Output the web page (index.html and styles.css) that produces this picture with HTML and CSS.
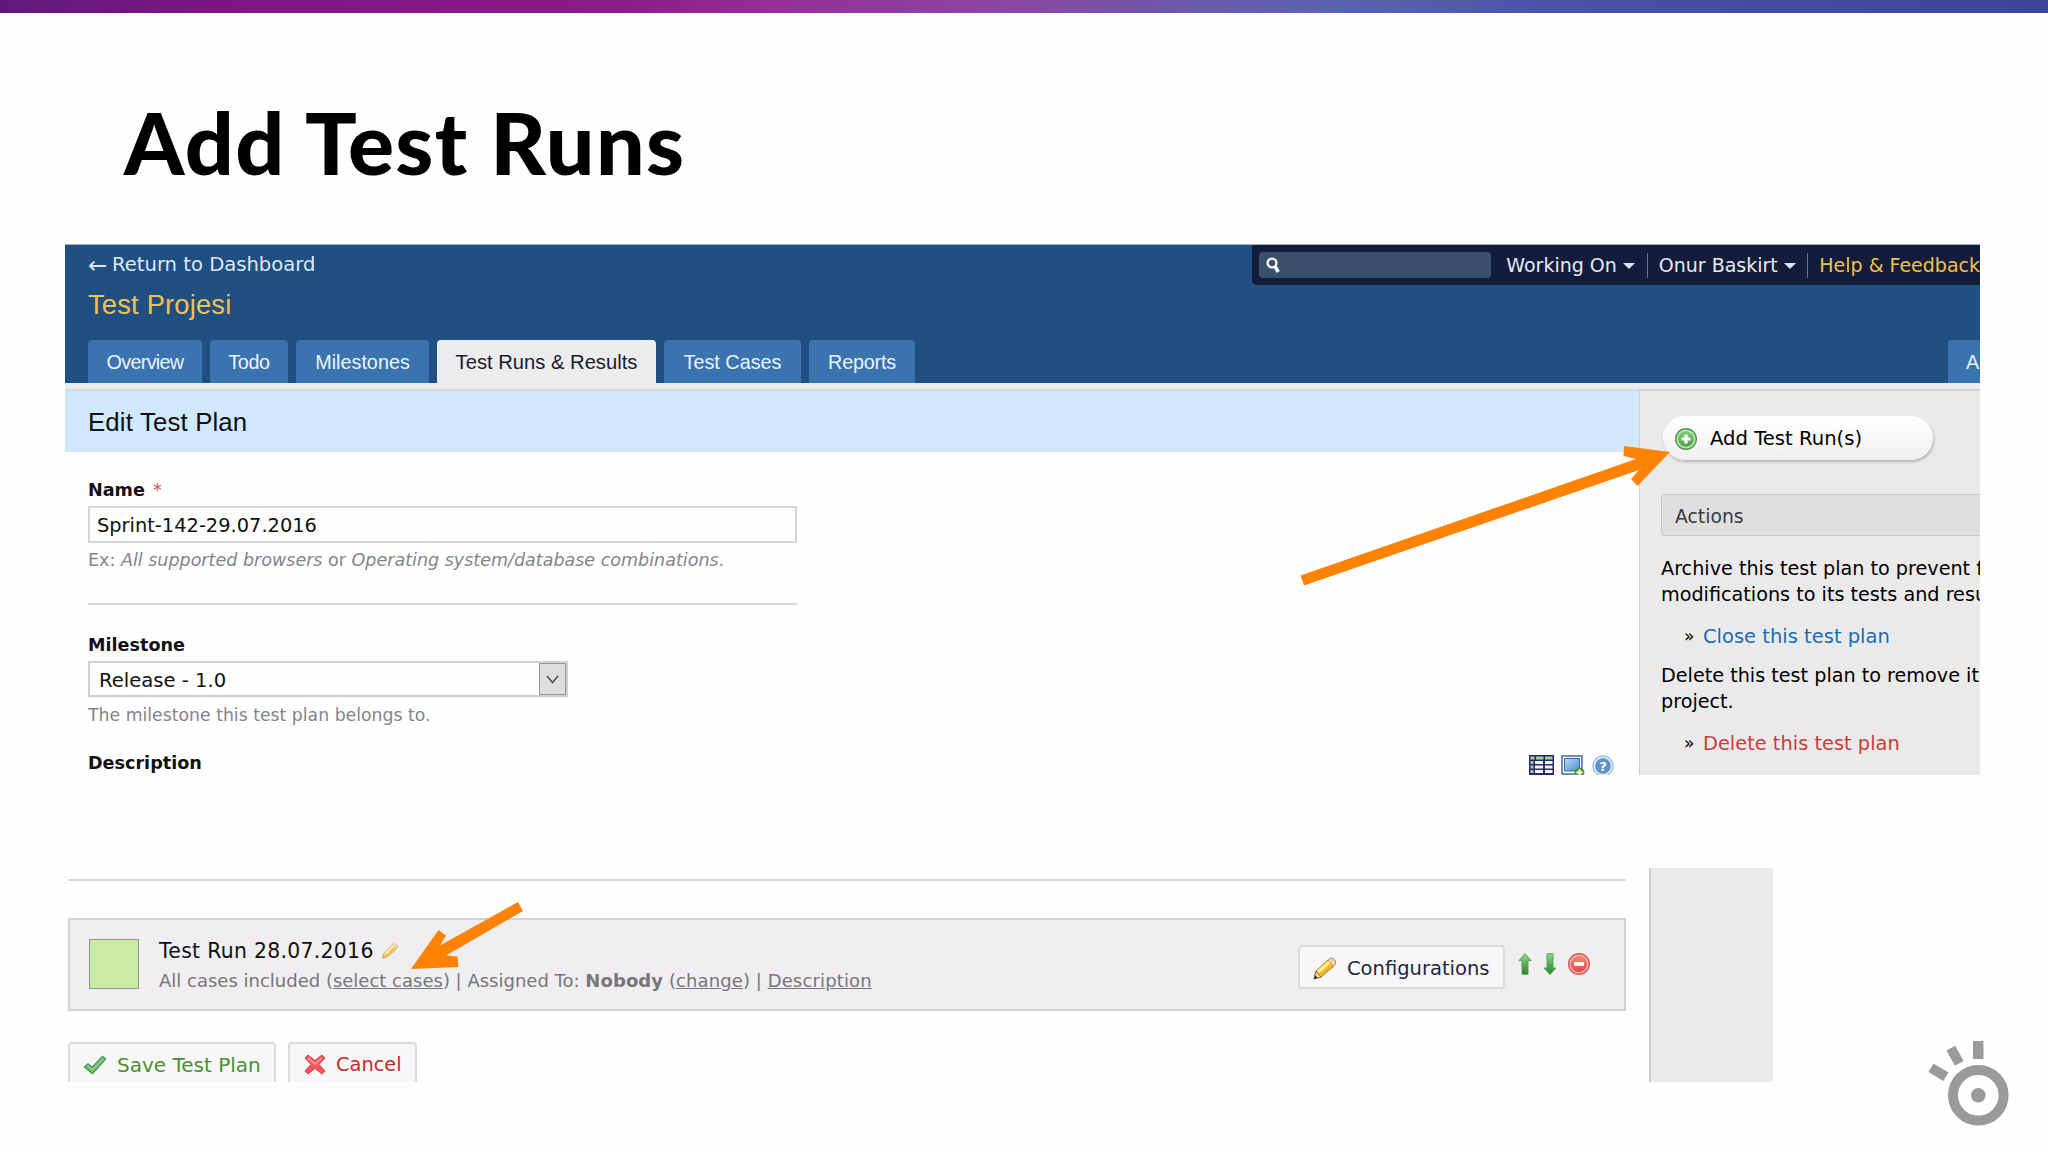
FILE: index.html
```
<!DOCTYPE html>
<html lang="en">
<head>
<meta charset="utf-8">
<title>Add Test Runs</title>
<link rel="stylesheet" href="styles.css">
</head>
<body>
<div class="stripe"></div>
<h1><span>Add Test Runs</span></h1>

<!-- plan editor -->
<div class="editor">
<div class="header">
  <div class="header-left">
    <a class="return"><span class="back">&larr;</span> <span>Return to Dashboard</span></a>
    <div class="project">Test Projesi</div>
    <div class="tabs">
      <a class="tab tab-overview">Overview</a>
      <a class="tab tab-todo">Todo</a>
      <a class="tab tab-milestones">Milestones</a>
      <a class="tab tab-runs active">Test Runs &amp; Results</a>
      <a class="tab tab-cases">Test Cases</a>
      <a class="tab tab-reports">Reports</a>
    </div>
  </div>
  <div class="header-right">
    <div class="topbar">
      <div class="search"><svg width="14" height="17" viewBox="0 0 14 17"><circle cx="6" cy="6" r="4.4" fill="none" stroke="#f4f6fa" stroke-width="2.4"/><path d="M9 9.5L12.3 15" stroke="#f4f6fa" stroke-width="3.6"/></svg></div>
      <span class="menu menu-working">Working On<i class="caret"></i></span>
      <span class="menu menu-user">Onur Baskirt<i class="caret"></i></span>
      <span class="menu menu-help">Help &amp; Feedback</span>
    </div>
    <a class="tab tab-admin">A</a>
  </div>
</div>

<div class="columns">
  <div class="main">
    <div class="page-title">Edit Test Plan</div>
    <div class="form">
      <div class="label">Name <span class="required">*</span></div>
      <div class="input">Sprint-142-29.07.2016</div>
      <div class="hint hint-name">Ex: <em>All supported browsers</em> or <em>Operating system/database combinations</em>.</div>
      <div class="rule"></div>
      <div class="label">Milestone</div>
      <div class="select"><span>Release - 1.0</span><span class="select-button"><svg width="13" height="9" viewBox="0 0 13 9"><path d="M1 1L6.500 7.500L12 1" fill="none" stroke="#505054" stroke-width="1.600"/></svg></span></div>
      <div class="hint hint-milestone">The milestone this test plan belongs to.</div>
      <div class="description">
        <div class="label">Description</div>
        <div class="tools">
          <svg width="25" height="21" viewBox="0 0 25 21"><rect width="25" height="21" fill="#28286a"/><g fill="#9ed29a"><path d="M1.500 1.500h4v3h-4zM7 1.500h7.500v3H7zM16 1.500h7.500v3H16zM1.500 6h3v3h-3zM1.500 10.500h3v3h-3zM1.500 15h3v3h-3z"/></g><g fill="#f4f4fb"><path d="M6 6h8v3H6zM16 6h7.500v3H16zM6 10.500h8v3H6zM16 10.500h7.500v3H16zM6 15h8v3H6zM16 15h7.500v3H16z"/></g></svg>
          <svg width="24" height="21" viewBox="0 0 24 21"><defs><linearGradient id="sky" x2="1" y2="1"><stop stop-color="#b8dcf5"/><stop offset="1" stop-color="#4c8cc8"/></linearGradient></defs><rect x="1" y="1" width="20" height="18" fill="#fff" stroke="#49659f" stroke-width="1.500"/><rect x="3.500" y="3.500" width="15" height="12.500" fill="url(#sky)" stroke="#3c6aa8"/><circle cx="18.500" cy="17.500" r="5" fill="#4d943b"/><path d="M18.500 14.500v6M15.500 17.500h6" stroke="#fff" stroke-width="2"/></svg>
          <svg width="22" height="22" viewBox="0 0 22 22"><circle cx="11" cy="11" r="10.200" fill="#dce9f6" stroke="#86a8d0"/><circle cx="11" cy="11" r="7.800" fill="#5f91ca"/><text x="11" y="16" text-anchor="middle" class="help-mark">?</text></svg>
        </div>
      </div>
    </div>
  </div>
  <div class="sidebar">
    <div class="pill">
      <svg width="22" height="22" viewBox="0 0 22 22"><defs><linearGradient id="leaf" x2="0" y2="1"><stop stop-color="#7fca7b"/><stop offset="1" stop-color="#4ba043"/></linearGradient></defs><circle cx="11" cy="11" r="10.300" fill="#bfe3b6" stroke="#4b9a46" stroke-width="1.400"/><circle cx="11" cy="11" r="7.800" fill="url(#leaf)"/><path d="M11 6.500v9M6.500 11h9" stroke="#fff" stroke-width="3.200"/></svg>
      <span>Add Test Run(s)</span>
    </div>
    <div class="box-title">Actions</div>
    <p>Archive this test plan to prevent f<br>modifications to its tests and resu</p>
    <div class="action"><span class="raquo">&raquo;</span><a class="close">Close this test plan</a></div>
    <p>Delete this test plan to remove it<br>project.</p>
    <div class="action"><span class="raquo">&raquo;</span><a class="delete">Delete this test plan</a></div>
  </div>
</div>
</div>

<!-- run list -->
<div class="bottom">
<div class="runs">
  <div class="runs-main">
    <div class="rule"></div>
    <div class="run">
      <div class="swatch"></div>
      <div class="run-text">
        <div class="run-name"><span>Test Run 28.07.2016</span>
          <svg width="18" height="16" viewBox="0 0 24 23"><path d="M1 22L3 15L16 2Q19 0 22 3Q24 6 21 9L8 20Z" fill="#efc660" stroke="#c99b55"/><path d="M5 16L17 4" stroke="#fff0a8" stroke-width="3"/><path d="M16 2Q19 0 22 3Q24 6 21 9Z" fill="#f3d5b5"/></svg>
        </div>
        <div class="run-info">All cases included (<u>select cases</u>) | Assigned To: <b>Nobody</b> (<u>change</u>) | <u>Description</u></div>
      </div>
      <div class="button config">
        <svg width="24" height="23" viewBox="0 0 24 23"><path d="M1 22L3 14L16 2Q19 0 22 3Q24 6 21 9L8 20Z" fill="#eeb92f" stroke="#b47a2c"/><path d="M5 15L17 4.500" stroke="#fff08a" stroke-width="3.500"/><path d="M15 3Q19 -1 22 3Q24 6 20.500 9.500Z" fill="#f4d2b4" stroke="#d6935b"/><path d="M3 14L8 20L1 22Z" fill="#f3d9ae" stroke="#9a6a30"/><path d="M1 22L2 18L4.500 21Z" fill="#3c2a18"/></svg>
        <span>Configurations</span>
      </div>
      <div class="run-icons">
        <svg width="14" height="22" viewBox="0 0 14 22"><defs><linearGradient id="up" x2="0" y2="1"><stop stop-color="#8ed98a"/><stop offset="1" stop-color="#267f2e"/></linearGradient></defs><path d="M7 .7L13 7.500H10V21.300H4V7.500H1Z" fill="url(#up)" stroke="#55a653"/></svg>
        <svg width="14" height="22" viewBox="0 0 14 22"><path d="M4 .7H10V15H13L7 21.500L1 15H4Z" fill="url(#up)" stroke="#55a653"/></svg>
        <svg width="22" height="22" viewBox="0 0 22 22"><defs><linearGradient id="stop" x2="0" y2="1"><stop stop-color="#f58a80"/><stop offset="1" stop-color="#e4473f"/></linearGradient></defs><circle cx="11" cy="11" r="10.300" fill="#f9beb6" stroke="#d9564e" stroke-width="1.400"/><circle cx="11" cy="11" r="8.300" fill="url(#stop)"/><path d="M6 11h10" stroke="#fff" stroke-width="3.600"/></svg>
      </div>
    </div>
    <div class="buttons">
      <div class="button save">
        <svg width="24" height="20" viewBox="0 0 24 20"><path d="M1 12L5 8.500L9 12L19.500 1L23 4L9.500 19Z" fill="#62b268" stroke="#3f8c48" stroke-linejoin="round"/><path d="M4.500 11L9.500 15L20 4" fill="none" stroke="#94d096" stroke-width="1.500"/></svg>
        <span>Save Test Plan</span>
      </div>
      <div class="button cancel">
        <svg width="22" height="21" viewBox="0 0 22 21"><path d="M4 1L11 6.500L18 1L21 4L15 10.500L21 17L18 20L11 14.500L4 20L1 17L7 10.500L1 4Z" fill="#f4565a" stroke="#d23e42" stroke-linejoin="round"/><path d="M4 4L11 10L18 4" fill="none" stroke="#fa9594" stroke-width="2"/></svg>
        <span>Cancel</span>
      </div>
    </div>
  </div>
  <div class="runs-side"></div>
</div>
<svg class="logo" width="82" height="86" viewBox="1928 1040 82 86"><g fill="#9b999c"><rect x="1973" y="1041" width="10.500" height="18"/><rect x="1950" y="1047" width="10" height="17.500" transform="rotate(-29 1955 1055.700)"/><rect x="1933.500" y="1063.500" width="10" height="17.500" transform="rotate(-59 1938.500 1072.300)"/><circle cx="1978.300" cy="1095.300" r="7.300"/></g><circle cx="1978.300" cy="1095.300" r="25.300" fill="none" stroke="#9b999c" stroke-width="10"/></svg>
</div>

<!-- callout arrows, drawn over both panels -->
<svg class="arrows" width="2048" height="1152" viewBox="0 0 2048 1152"><path d="M1300.500 575.500L1636 459L1623.500 456L1624 446L1670 452L1637.500 486L1631 479L1639 470L1304 585.500Z"/><path d="M518 902L440 945.500L446 935.500L438.500 930L411 969L458.500 967L457.500 956.500L446 955.500L523 911Z"/></svg>
</body>
</html>
```
FILE: styles.css
```
* { box-sizing: border-box; }

body {
  margin: 0;
  height: 1152px;
  overflow: hidden;
  background: #fefefe;
  color: #111;
  font: 19.2px "DejaVu Sans", Verdana, sans-serif;
  white-space: nowrap;
}

svg { display: block; flex: none; }

.stripe {
  height: 13px;
  background: linear-gradient(to right, #5f1a7c 0, #7a1683 200px, #8a1c89 620px, #96309a 780px, #8a46a2 1000px, #6a5aaa 1200px, #5a62b0 1340px, #4a50a2 1600px, #3f4596 2048px);
}

h1 {
  margin: 0;
  padding: 79px 0 0 124px;
  height: 231px;
  font: 900 86px/100px Lato, sans-serif;
  letter-spacing: 1.35px;
  color: #000;
}

/* Plan editor */

.editor {
  margin-left: 65px;
  width: 1915px;
  height: 531px;
  overflow: hidden;
}

.header {
  display: flex;
  justify-content: space-between;
  height: 139px;
  border-top: 1px solid #9cb4c4;
  background: #205081;
}

.header-left {
  display: flex;
  flex-direction: column;
  padding-left: 23px;
}

.return {
  height: 39px;
  line-height: 40px;
  font-size: 19.6px;
  color: #dce6f2;
  display: flex;
  gap: 5px;
}

.back { font-size: 23px; width: 19px; }

.project {
  height: 42px;
  line-height: 42px;
  font: 27.3px/42px "Liberation Sans", Arial, sans-serif;
  letter-spacing: .2px;
  color: #f2c053;
}

.tabs {
  display: flex;
  gap: 8px;
  margin-top: auto;
}

.tab {
  height: 43px;
  border-radius: 4px 4px 0 0;
  background: #3b73af;
  color: #eaf2fa;
  font: 19.8px/45px "Liberation Sans", Arial, sans-serif;
  text-align: center;
}

.tab.active {
  background: #ececec;
  color: #1a1a2c;
}

.tab-overview { width: 114px; letter-spacing: -.7px; }
.tab-todo { width: 78px; letter-spacing: -.4px; }
.tab-milestones { width: 133px; }
.tab-runs { width: 219px; font-size: 20.2px; }
.tab-cases { width: 137px; }
.tab-reports { width: 106px; letter-spacing: -.2px; }
.tab-admin { width: 32px; padding-left: 18px; overflow: hidden; text-align: left; border-top-right-radius: 0; }

.header-right {
  display: flex;
  flex-direction: column;
  justify-content: space-between;
  align-items: flex-end;
}

.topbar {
  display: flex;
  align-items: center;
  width: 728px;
  height: 40px;
  padding-left: 7px;
  overflow: hidden;
  border-bottom-left-radius: 5px;
  background: #131d3b;
  font-size: 19px;
  color: #e4eaf6;
}

.search {
  width: 233px;
  height: 26px;
  padding: 5px 7px;
  border-radius: 4px;
  background: #3a506a;
  margin-right: 15px;
  margin-bottom: 1px;
}

.menu {
  display: flex;
  align-items: center;
  height: 25px;
  line-height: 25px;
  padding-top: 1px;
}

.menu-working { width: 141px; }
.menu-user { width: 161px; border-left: 1px solid #66708c; padding-left: 11px; }
.menu-help { border-left: 1px solid #66708c; padding-left: 11px; color: #f0c24e; }

.caret {
  margin-left: 6px;
  border: 6px solid transparent;
  border-top-color: #d8e4fa;
  border-bottom: 0;
}

.columns { display: flex; height: 392px; border-top: 6px solid #ececec; }

.main { width: 1574px; flex: none; border-top: 2px solid #cfdbe4; }

.page-title {
  height: 61px;
  padding-left: 23px;
  background: #d0e7fc;
  font: 25.8px/63px "Liberation Sans", Arial, sans-serif;
  letter-spacing: .15px;
}

.form { padding: 25px 25px 0 23px; }

.label {
  height: 29px;
  line-height: 27px;
  font-size: 17.6px;
  font-weight: bold;
}

.required { color: #c8504e; font-weight: normal; margin-left: 2px; }

.input {
  width: 709px;
  height: 37px;
  padding-left: 7px;
  border: 2px solid #d6d6d8;
  font-size: 19.4px;
  line-height: 35px;
}

.hint { color: #84848a; font-size: 17.53px; height: 34px; line-height: 34px; }

.hint-milestone { font-size: 17.3px; height: 53px; line-height: 36px; }

.rule { height: 2px; background: #d8d8da; }

.form .rule { width: 709px; margin: 26px 0 27px; }

.select {
  display: flex;
  justify-content: space-between;
  width: 480px;
  height: 36px;
  padding-left: 9px;
  border: 2px solid #d0d0d3;
  font-size: 19.6px;
  line-height: 35px;
}

.select-button {
  display: flex;
  align-items: center;
  justify-content: center;
  width: 27px;
  border: 1px solid #98989c;
  background: #dededf;
}

.description { display: flex; justify-content: space-between; }

.tools { display: flex; gap: 7px; padding-top: 5px; }

.help-mark { font: bold 13px "DejaVu Sans", sans-serif; fill: #fff; }

.sidebar {
  width: 341px;
  padding: 25px 0 0 21px;
  overflow: hidden;
  border-left: 1px solid #cccccf;
  border-top: 2px solid #d2d2d4;
  background: #ebeaeb;
  color: #000;
}

.pill {
  display: flex;
  align-items: center;
  gap: 13px;
  width: 270px;
  height: 44px;
  margin: 0 0 34px 2px;
  padding: 1px 0 0 12px;
  border-radius: 22px;
  background: linear-gradient(#fff, #f0f0f0);
  box-shadow: 1px 2px 3px #b4b4b6;
  font-size: 19.6px;
}

.box-title {
  width: 340px;
  height: 42px;
  padding-left: 13px;
  border: 1px solid #c6c6c8;
  border-radius: 3px;
  background: #e0dfe0;
  font-size: 18.8px;
  line-height: 43px;
  color: #3a3a3e;
}

.sidebar p { margin: 20px 0 0; line-height: 26px; }

.sidebar .action + p { margin-top: 13px; }

.action {
  display: flex;
  gap: 9px;
  height: 28px;
  margin-top: 14px;
  padding-left: 23px;
  line-height: 29px;
}

.raquo { font-size: 17px; width: 10px; }

.close { color: #1a6ab4; font-size: 19.5px; }
.delete { color: #cc3c38; font-size: 19.4px; }

/* Run list */

.bottom { display: flex; padding: 93px 38px 0 68px; justify-content: space-between; }

.runs { display: flex; gap: 23px; height: 214px; overflow: hidden; }

.runs-main { width: 1558px; padding-top: 11px; }

.runs-side { width: 124px; border-left: 2px solid #ccccd0; background: #ebe9eb; }

.run {
  display: flex;
  height: 93px;
  margin-top: 37px;
  padding: 0 34px 0 19px;
  border: 2px solid #d2d1d5;
  background: #f0eef0;
}

.swatch {
  width: 50px;
  height: 50px;
  margin-top: 19px;
  border: 1px solid #8d9c82;
  background: #caeba6;
}

.run-text { margin: 15px auto 0 20px; }

.run-name { display: flex; align-items: center; gap: 7px; height: 31px; font-size: 20.4px; letter-spacing: .3px; }

.run-info { height: 30px; line-height: 30px; font-size: 18px; color: #77767a; }

.run-info b { font-size: 18px; letter-spacing: .1px; }

.run-info b + u, .run-info b ~ u { letter-spacing: .15px; }

.button {
  display: flex;
  align-items: center;
  height: 44px;
  border: 2px solid #dcdbde;
  border-radius: 4px;
  background: #f7f6f8;
  font-size: 19.5px;
}

.config { width: 207px; margin-top: 25px; padding: 2px 0 0 13px; gap: 10px; color: #26263a; }

.run-icons { display: flex; gap: 11px; margin: 33px 0 0 13px; }

.buttons { display: flex; gap: 12px; margin-top: 31px; }

.save { width: 208px; padding: 1px 0 0 13px; gap: 10px; color: #4c8f2c; font-size: 20px; }

.cancel { width: 129px; padding: 1px 0 0 14px; gap: 10px; color: #c42a28; font-size: 19.4px; }

.logo { margin-top: 172px; }

.arrows { position: absolute; left: 0; top: 0; fill: #ff8205; }
```
